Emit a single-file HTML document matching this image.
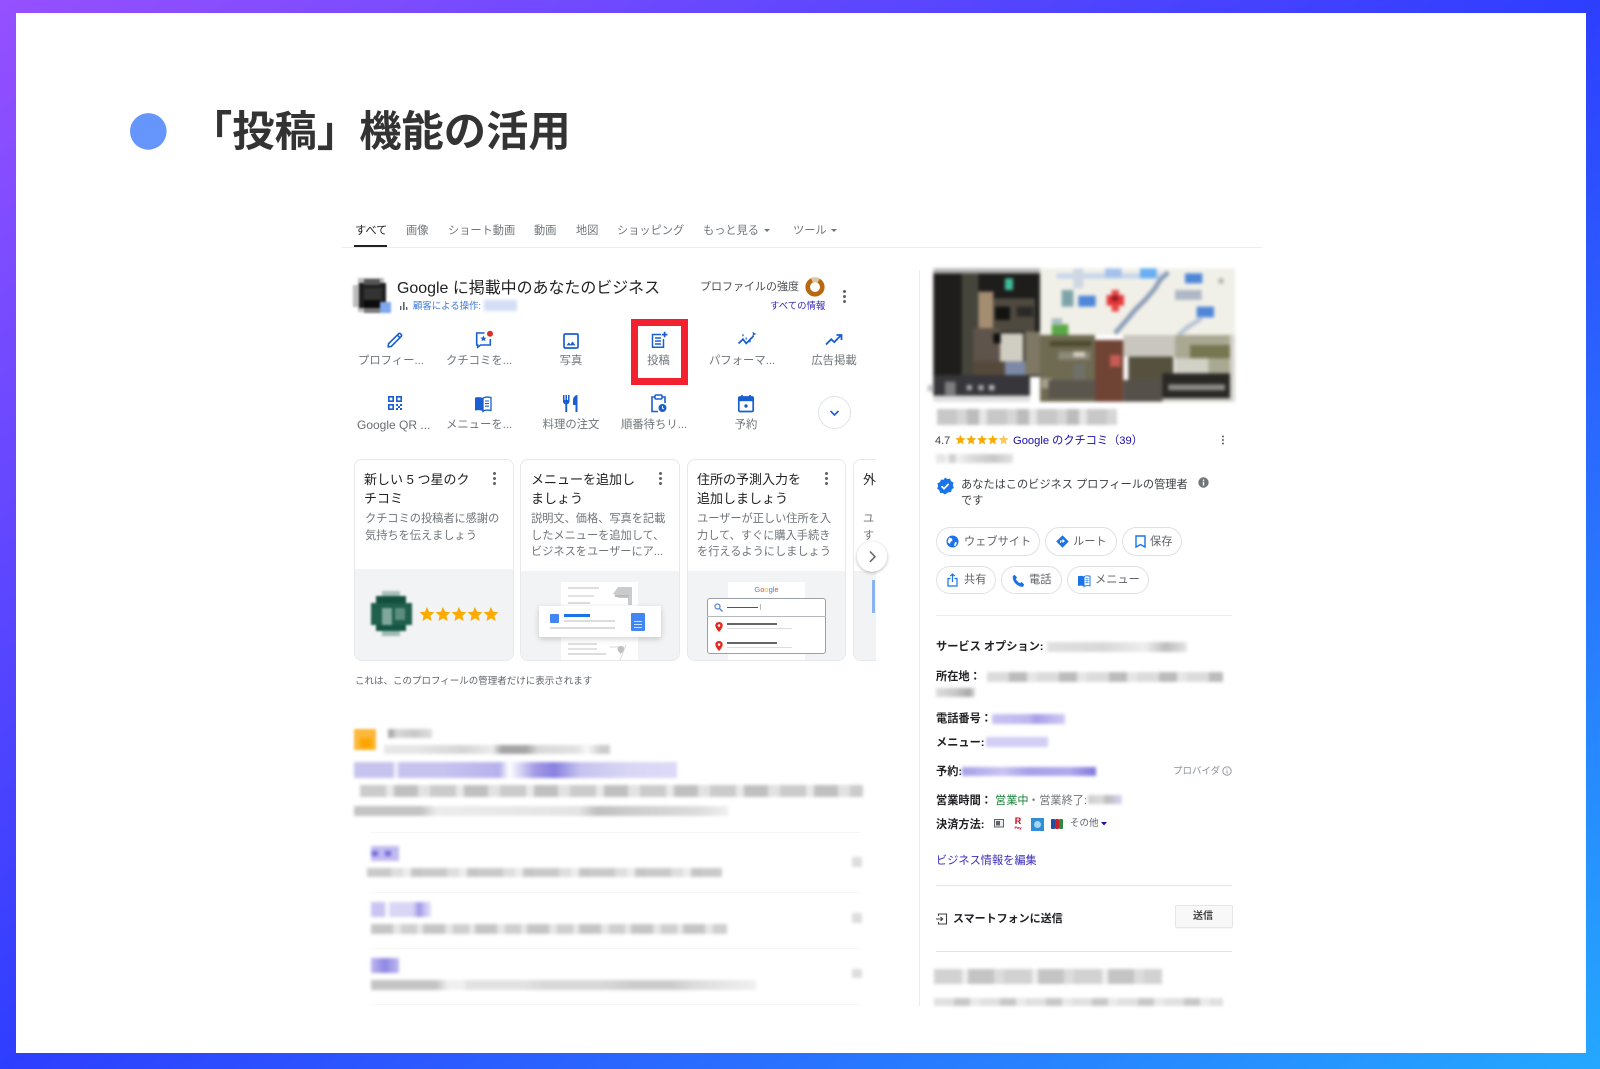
<!DOCTYPE html>
<html lang="ja"><head><meta charset="utf-8"><title>「投稿」機能の活用</title>
<style>
html,body{margin:0;padding:0}
body{width:1600px;height:1069px;overflow:hidden;position:relative;background:linear-gradient(to bottom right,#9650ff 0%,#2e3eff 50%,#24a8ff 100%);font-family:"Liberation Sans","Noto Sans CJK JP",sans-serif}
#w{position:absolute;left:16px;top:13px;width:1570px;height:1040px;background:#fff}
#g{position:absolute;left:0;top:0;width:1600px;height:1069px;filter:blur(.35px)}
.t{position:absolute;white-space:nowrap;height:16px;line-height:16px;font-size:11.2px;color:#70757a}
.c{text-align:center;width:100px}
.k{color:#202124;font-weight:700}
.l{color:#1a0dab}
.b{position:absolute;filter:blur(1.7px)}
.d{position:absolute;height:1px;background:#e8eaed}
.s{position:absolute;display:block;overflow:visible}
.card{position:absolute;top:9px;height:202px;box-sizing:border-box;border:1px solid #e6e8eb;border-radius:8px;overflow:hidden;background:#fff}
.card i{position:absolute;left:-1px;right:-1px;top:109px;bottom:-1px;background:#f1f3f4;display:block}
.chip{position:absolute;box-sizing:border-box;border:1px solid #dfe1e5;border-radius:15px;background:#fff}
.ct{font-size:13px;color:#202124;line-height:19px;height:19px}
.kb{position:absolute;width:3px;height:3px;border-radius:50%;background:#5f6368;box-shadow:0 5px 0 #5f6368,0 -5px 0 #5f6368}
.al{font-size:11.35px}
</style></head><body>
<div id="w"></div>

<svg class="s" style="left:130px;top:113px" width="37" height="37"><circle cx="18.3" cy="18.4" r="18.3" fill="#6696fb"/></svg>
<div style="position:absolute;left:190px;top:105px;height:54px;line-height:54px;font-size:42.3px;font-weight:700;color:#333;white-space:nowrap">「投稿」機能の活用</div>

<div id="g">
<!-- tabs -->
<div class="t" style="left:355px;top:223px;color:#202124">すべて</div>
<div class="t" style="left:406px;top:223px">画像</div>
<div class="t" style="left:448px;top:223px">ショート動画</div>
<div class="t" style="left:534px;top:223px">動画</div>
<div class="t" style="left:576px;top:223px">地図</div>
<div class="t" style="left:617px;top:223px">ショッピング</div>
<div class="t" style="left:703px;top:223px">もっと見る</div>
<div class="t" style="left:793px;top:223px">ツール</div>
<svg class="s" style="left:764px;top:229px" width="6" height="4"><path d="M0 0h6L3 3z" fill="#70757a"/></svg>
<svg class="s" style="left:831px;top:229px" width="6" height="4"><path d="M0 0h6L3 3z" fill="#70757a"/></svg>
<div style="position:absolute;left:354px;top:245px;width:33px;height:2px;background:#202124"></div>
<div class="d" style="left:342px;top:247px;width:920px;background:#ebedf0"></div>

<!-- header -->
<svg class="s" style="left:350px;top:276px;filter:blur(1px)" width="42" height="38" viewBox="0 0 42 38">
<rect x="3" y="9" width="6" height="22" fill="#bbb"/><rect x="8" y="2" width="26" height="34" fill="#bcbcbc"/>
<rect x="9" y="7" width="27" height="25" fill="#1e1e1e"/><rect x="14" y="3" width="16" height="6" fill="#555"/>
<rect x="14" y="12" width="18" height="12" fill="#333"/><rect x="14" y="24" width="16" height="8" fill="#0c0c0c"/>
<rect x="30" y="26" width="11" height="11" fill="#80a8ee"/><rect x="14" y="32" width="16" height="5" fill="#777"/>
</svg>
<div class="t" style="left:397px;top:279px;height:20px;line-height:20px;font-size:15.95px;color:#202124">Google に掲載中のあなたのビジネス</div>
<svg class="s" style="left:400px;top:301px" width="8" height="9"><path d="M0 5h1.4v4H0zM3 1h1.6v8H3zM6 6h1.4v3H6z" fill="#5f6368"/></svg>
<div class="t" style="left:413px;top:298px;font-size:9.4px;color:#3b78d8">顧客による操作:</div>
<div class="b" style="left:484px;top:300px;width:33px;height:11px;background:#d4def5"></div>
<div class="t" style="left:700px;top:279px;font-size:11px;color:#4a4d51">プロファイルの強度</div>
<svg class="s" style="left:805px;top:277px" width="20" height="20"><circle cx="10" cy="10" r="7.3" fill="none" stroke="#b8690f" stroke-width="4.6"/><circle cx="10" cy="10" r="7.3" fill="none" stroke="#dcc6a4" stroke-width="4.6" stroke-dasharray="7 40" transform="rotate(-115 10 10)"/></svg>
<div class="kb" style="left:843px;top:295px"></div>
<div class="t" style="left:770px;top:298px;font-size:9.4px;color:#3526b5">すべての情報</div>

<!-- action icons row 1 -->
<svg class="s" style="left:386px;top:331px" width="18" height="18" viewBox="0 0 18 18" fill="none" stroke="#1a5fd0" stroke-width="1.6"><path d="M2.5 12.8 2.2 15.8l3-.3L15.2 5.4a1.3 1.3 0 0 0 0-1.8l-.8-.8a1.3 1.3 0 0 0-1.8 0z"/><path d="M11.4 4.2l2.4 2.4"/></svg>
<svg class="s" style="left:474px;top:330px" width="20" height="20" viewBox="0 0 20 20"><path d="M10.5 3H2.7v12h1v2.2L6.6 15h9.7V9" fill="none" stroke="#1a5fd0" stroke-width="1.6"/><path d="M9.4 5.4l.9 2.2 2.2.1-1.7 1.4.6 2.2-2-1.2-2 1.2.6-2.2-1.7-1.4 2.2-.1z" fill="#1a5fd0"/><circle cx="16" cy="3.7" r="3" fill="#d93025"/></svg>
<svg class="s" style="left:562px;top:332px" width="18" height="18" viewBox="0 0 18 18"><rect x="2" y="2" width="14" height="14" rx="1.2" fill="none" stroke="#1a5fd0" stroke-width="1.7"/><path d="M4.5 13.4l2.3-3 1.7 2 2-3 3 4z" fill="#1a5fd0"/></svg>
<svg class="s" style="left:650px;top:331px" width="18" height="18" viewBox="0 0 18 18" fill="none" stroke="#1a5fd0" stroke-width="1.5"><path d="M11 3.5H2.5v12.8h11V8"/><path d="M5 7h6M5 10h6M5 13h6"/><path d="M14.6 .8v5.6M11.8 3.6h5.6" stroke-width="1.7"/></svg>
<svg class="s" style="left:737px;top:331px" width="20" height="18" viewBox="0 0 20 18" fill="none" stroke="#1a5fd0" stroke-width="1.7"><path d="M1.500 12.500 6 8.200l3.200 4.200L16.500 5"/><path d="M6 3.200v2M9.200 6.500v2M13 9.500v2M16 1.200l.5 1.300 1.300.5-1.300.5-.5 1.300" stroke-width="1.300"/></svg>
<svg class="s" style="left:825px;top:332px" width="18" height="16" viewBox="0 0 18 16" fill="none" stroke="#1a5fd0" stroke-width="1.8"><path d="M1 12.500 6.300 7.300l3 2.800 6.400-6.600"/><path d="M11.500 3h5v5"/></svg>
<!-- labels row 1 -->
<div class="t al" style="left:358px;top:353px">プロフィー...</div>
<div class="t al" style="left:446px;top:353px">クチコミを...</div>
<div class="t c al" style="left:521px;top:353px">写真</div>
<div class="t c al" style="left:608.500px;top:353px">投稿</div>
<div class="t al" style="left:709px;top:353px">パフォーマ...</div>
<div class="t c al" style="left:784px;top:353px">広告掲載</div>
<!-- red box -->
<div style="position:absolute;left:631px;top:319px;width:56.500px;height:66px;box-sizing:border-box;border:7px solid #f3212f"></div>

<!-- action icons row 2 -->
<svg class="s" style="left:387px;top:395px" width="16" height="16" viewBox="0 0 16 16" fill="#1a5fd0"><path d="M1 1h6v6H1zM2.600 2.600v2.800h2.800V2.600zM9 1h6v6H9zM10.600 2.600v2.800h2.800V2.600zM1 9h6v6H1zM2.600 10.600v2.800h2.800v-2.800z" fill-rule="evenodd"/><path d="M9 9h2v2H9zM13 9h2v2h-2zM11 11h2v2h-2zM9 13h2v2H9zM13 13h2v2h-2z"/></svg>
<svg class="s" style="left:474px;top:396px" width="18" height="16" viewBox="0 0 18 16"><path d="M9 2.200C7.500 1 4.500.8 1 1.500V14.500c3.500-.7 6.500-.5 8 .9z" fill="#1a5fd0"/><path d="M9 2.200c1.500-1.200 4.500-1.400 8-.7V14.500c-3.500-.7-6.500-.5-8 .9z" fill="none" stroke="#1a5fd0" stroke-width="1.300"/><path d="M11 5h4M11 7.600h4M11 10.200h4" stroke="#1a5fd0" stroke-width="1.100"/></svg>
<svg class="s" style="left:562px;top:394px" width="17" height="19" viewBox="0 0 17 19" fill="#1a5fd0"><path d="M1 1h1.500v5h1V1H5v5h1V1h1.500v6.500C7.500 9 6.200 10 5.200 10.200V18H3.300V10.200C2.200 10 1 9 1 7.500z"/><path d="M11 6c0-2.500 2-5 4.500-5v17h-2v-7H11z"/></svg>
<svg class="s" style="left:650px;top:394px" width="17" height="19" viewBox="0 0 17 19"><path d="M5 3H2v14.500h6M12 3h3v6" fill="none" stroke="#1a5fd0" stroke-width="1.600"/><rect x="5" y="1" width="7" height="4" rx="1" fill="none" stroke="#1a5fd0" stroke-width="1.500"/><circle cx="12.500" cy="14" r="4" fill="#1a5fd0"/><path d="M12.500 12v2.200l1.400.8" stroke="#fff" stroke-width=".9" fill="none"/></svg>
<svg class="s" style="left:737px;top:394px" width="18" height="19" viewBox="0 0 18 19"><rect x="1.800" y="3" width="14.400" height="14.500" rx="1.200" fill="none" stroke="#1a5fd0" stroke-width="1.700"/><path d="M1.800 3.500h14.400v3.700H1.800z" fill="#1a5fd0"/><path d="M5 1v3M13 1v3" stroke="#1a5fd0" stroke-width="1.700"/><circle cx="9" cy="12" r="1.700" fill="#1a5fd0"/></svg>
<!-- labels row 2 -->
<div class="t al" style="left:357px;top:417px;color:#6a6e72;font-size:12px">Google QR ...</div>
<div class="t al" style="left:446px;top:417px">メニューを...</div>
<div class="t c al" style="left:521px;top:417px">料理の注文</div>
<div class="t al" style="left:621px;top:417px">順番待ちリ...</div>
<div class="t c al" style="left:696px;top:417px">予約</div>
<svg class="s" style="left:818px;top:396px" width="33" height="33"><circle cx="16.500" cy="16.500" r="16" fill="#fff" stroke="#e0e2e6"/><path d="M12.500 15l4 4 4-4" fill="none" stroke="#1a5fd0" stroke-width="1.600"/></svg>

<!-- cards -->
<div style="position:absolute;left:340px;top:450px;width:536px;height:215px;overflow:hidden">
  <div class="card" style="left:14px;width:160px"><i></i></div>
  <div class="card" style="left:180px;width:160px"><i style="top:111px"></i></div>
  <div class="card" style="left:347px;width:159px"><i style="top:111px"></i></div>
  <div class="card" style="left:513px;width:60px"><i style="top:111px"></i></div>
  <div style="position:absolute;left:532px;top:130px;width:3px;height:33px;background:#8ab4f0"></div>
</div>
<div class="t ct" style="left:364px;top:470px">新しい 5 つ星のク</div>
<div class="t ct" style="left:364px;top:489px">チコミ</div>
<div class="t" style="left:365px;top:511px">クチコミの投稿者に感謝の</div>
<div class="t" style="left:365px;top:528px">気持ちを伝えましょう</div>
<div class="kb" style="left:493px;top:477px"></div>

<div class="t ct" style="left:531px;top:470px">メニューを追加し</div>
<div class="t ct" style="left:531px;top:489px">ましょう</div>
<div class="t" style="left:531px;top:511px">説明文、価格、写真を記載</div>
<div class="t" style="left:531px;top:528px">したメニューを追加して、</div>
<div class="t" style="left:531px;top:544px">ビジネスをユーザーにア...</div>
<div class="kb" style="left:659px;top:477px"></div>

<div class="t ct" style="left:697px;top:470px">住所の予測入力を</div>
<div class="t ct" style="left:697px;top:489px">追加しましょう</div>
<div class="t" style="left:697px;top:511px">ユーザーが正しい住所を入</div>
<div class="t" style="left:697px;top:528px">力して、すぐに購入手続き</div>
<div class="t" style="left:697px;top:544px">を行えるようにしましょう</div>
<div class="kb" style="left:825px;top:477px"></div>

<div class="t ct" style="left:863px;top:470px;width:13px;overflow:hidden">外</div>
<div class="t" style="left:863px;top:511px;width:13px;overflow:hidden">ユ</div>
<div class="t" style="left:863px;top:528px;width:13px;overflow:hidden">す</div>

<!-- next btn -->
<svg class="s" style="left:850px;top:535px" width="44" height="44"><defs><filter id="sh" x="-30%" y="-30%" width="160%" height="160%"><feDropShadow dx="0" dy="1" stdDeviation="1.500" flood-color="#000" flood-opacity=".3"/></filter></defs><circle cx="22" cy="21.700" r="15" fill="#fff" filter="url(#sh)"/><path d="M20 16.500l5 5.200-5 5.200" fill="none" stroke="#5f6368" stroke-width="1.500"/></svg>

<!-- avatar green -->
<svg class="s" style="left:371px;top:591px;filter:blur(1.100px)" width="41" height="45" viewBox="0 0 41 45">
<rect x="11" y="0" width="18" height="45" fill="#a8c0b8"/><rect x="5" y="5" width="30" height="35" fill="#3b7562"/><rect x="0" y="12" width="41" height="22" fill="#1f5f4c"/><rect x="5" y="5" width="30" height="7" fill="#144f3e"/><rect x="11" y="17" width="10" height="17" fill="#7fa79a"/><rect x="24" y="17" width="10" height="12" fill="#5d8d7f"/><rect x="5" y="34" width="30" height="6" fill="#145543"/><rect x="11" y="40" width="18" height="5" fill="#a0bab2"/>
</svg>
<!-- stars card1 -->
<svg class="s" style="left:419px;top:606px" width="80" height="16" viewBox="0 0 80 16" fill="#f9ab00">
<path d="M8 12.300 3.400 15l1.200-5.200L.6 6.300l5.300-.5L8 1l2.100 4.800 5.300.5-4 3.500L12.600 15z"/>
<path transform="translate(16)" d="M8 12.300 3.400 15l1.200-5.200L.6 6.300l5.300-.5L8 1l2.100 4.800 5.300.5-4 3.500L12.600 15z"/>
<path transform="translate(32)" d="M8 12.300 3.400 15l1.200-5.200L.6 6.300l5.300-.5L8 1l2.100 4.800 5.300.5-4 3.500L12.600 15z"/>
<path transform="translate(48)" d="M8 12.300 3.400 15l1.200-5.200L.6 6.300l5.300-.5L8 1l2.100 4.800 5.300.5-4 3.500L12.600 15z"/>
<path transform="translate(64)" d="M8 12.300 3.400 15l1.200-5.200L.6 6.300l5.300-.5L8 1l2.100 4.800 5.300.5-4 3.500L12.600 15z"/>
</svg>

<!-- card2 illustration -->
<div style="position:absolute;left:561px;top:582px;width:77px;height:78px;background:#fff"></div>
<div style="position:absolute;left:568px;top:587px;width:31px;height:2px;background:#ddd"></div>
<div style="position:absolute;left:568px;top:595px;width:26px;height:2px;background:#e2e2e2"></div>
<div style="position:absolute;left:568px;top:602px;width:22px;height:2px;background:#ddd"></div>
<svg class="s" style="left:612px;top:586px" width="22" height="20"><path d="M6 1h14v18h-4v-7H6V10L1 8z" fill="#c9cbcd"/><rect x="3" y="9" width="14" height="2" fill="#b9bbbd"/></svg>
<div style="position:absolute;left:539px;top:606px;width:122px;height:31px;background:#fff;border-radius:2px;box-shadow:0 2px 6px rgba(0,0,0,.18)"></div>
<div style="position:absolute;left:549.500px;top:614px;width:9px;height:9px;border-radius:1px;background:#4285f4"></div>
<div style="position:absolute;left:564px;top:614px;width:26px;height:3px;background:#1a73e8"></div>
<div style="position:absolute;left:564px;top:620px;width:51px;height:2px;background:#dcdcdc"></div>
<div style="position:absolute;left:550px;top:627px;width:65px;height:2px;background:#dcdcdc"></div>
<div style="position:absolute;left:631px;top:613px;width:14px;height:17.500px;background:#4285f4;border-radius:1px"></div>
<div style="position:absolute;left:634px;top:621px;width:8px;height:1px;background:#cfe0fc;box-shadow:0 3px 0 #cfe0fc,0 6px 0 #cfe0fc"></div>
<div style="position:absolute;left:568px;top:643px;width:29px;height:1.500px;background:#ddd;box-shadow:0 5px 0 #e2e2e2"></div>
<div style="position:absolute;left:568px;top:653px;width:38px;height:1.500px;background:#ddd"></div>
<svg class="s" style="left:610px;top:642px" width="24" height="18"><path d="M0 5h14M10 18L16 3" stroke="#d9dadb" fill="none"/><path d="M21 0c-2.500 0-4 1.800-4 3.800 0 2.500 4 6.200 4 6.200s4-3.700 4-6.200C25 1.800 23.500 0 21 0z" fill="#bdbfc1" transform="translate(-6 4) scale(.8)"/></svg>

<!-- card3 illustration -->
<div style="position:absolute;left:728px;top:582px;width:77px;height:78px;background:#fff"></div>
<div style="position:absolute;left:728px;top:584px;width:77px;text-align:center;font-size:7.500px;line-height:12px;font-family:'Liberation Sans',sans-serif;color:#7f9fd8"><span style="color:#4285f4">G</span><span style="color:#ea4335">o</span><span style="color:#fbbc05">o</span><span style="color:#4285f4">g</span><span style="color:#34a853">l</span><span style="color:#ea4335">e</span></div>
<div style="position:absolute;left:707px;top:598px;width:119px;height:56px;box-sizing:border-box;background:#fff;border:1px solid #9aa0a6;border-radius:3px"></div>
<div style="position:absolute;left:707px;top:616px;width:119px;height:1px;background:#b5b9bd"></div>
<svg class="s" style="left:714px;top:603px" width="9" height="9"><circle cx="3.500" cy="3.500" r="2.500" fill="none" stroke="#5a7fd6" stroke-width="1.200"/><path d="M5.500 5.500L8.500 8.500" stroke="#5a7fd6" stroke-width="1.300"/></svg>
<div style="position:absolute;left:727px;top:606.500px;width:31px;height:1.500px;background:#555"></div>
<div style="position:absolute;left:760px;top:604px;width:1px;height:6px;background:#bbb"></div>
<div style="position:absolute;left:727px;top:623px;width:50px;height:2px;background:#666"></div>
<div style="position:absolute;left:727px;top:627.500px;width:65px;height:1.500px;background:#ddd"></div>
<div style="position:absolute;left:727px;top:642px;width:50px;height:2px;background:#666"></div>
<div style="position:absolute;left:727px;top:646.500px;width:65px;height:1.500px;background:#ddd"></div>
<svg class="s" style="left:715px;top:622px" width="8" height="10"><path d="M4 0C1.800 0 .3 1.600.3 3.500.3 6 4 10 4 10s3.700-4 3.700-6.500C7.700 1.600 6.200 0 4 0z" fill="#e5281f"/><circle cx="4" cy="3.500" r="1.300" fill="#fff"/></svg>
<svg class="s" style="left:715px;top:641px" width="8" height="10"><path d="M4 0C1.800 0 .3 1.600.3 3.500.3 6 4 10 4 10s3.700-4 3.700-6.500C7.700 1.600 6.200 0 4 0z" fill="#e5281f"/><circle cx="4" cy="3.500" r="1.300" fill="#fff"/></svg>

<div class="t" style="left:355px;top:674px;font-size:9.500px;color:#5f6368">これは、このプロフィールの管理者だけに表示されます</div>

<!-- blurred organic result -->
<div class="b" style="left:354px;top:729px;width:22px;height:21px;background:#fcb83c;filter:blur(1.300px)"></div>
<div class="b" style="left:360px;top:738px;width:12px;height:10px;background:#fba600"></div>
<div class="b" style="left:388px;top:729px;width:44px;height:9px;background:linear-gradient(90deg,#aaa 0 8%,#d8d8d8 20%,#c8c8c8 60%,#ddd)"></div>
<div class="b" style="left:384px;top:745px;width:226px;height:9px;background:linear-gradient(90deg,#e6e6e6 0 15%,#d5d5d5 35%,#ececec 48%,#a5a5a5 52%,#a5a5a5 63%,#d8d8d8 68%,#e2e2e2 85%,#f8f8f8 90%,#ccc 96%)"></div>
<div class="b" style="left:354px;top:762px;width:323px;height:16px;background:linear-gradient(90deg,#c6c3ef 0 12%,#fff 13%,#c6c3ef 14% 22%,#c6c3ef 28%,#b6b1ec 45%,#fff 48%,#a39ce6 56%,#8880e0 62%,#c6c3ef 70%,#d8d6f4 85%,#dcdaf6)"></div>
<div class="b" style="left:360px;top:785px;width:503px;height:12px;background:repeating-linear-gradient(90deg,#cbcbcb 0 26px,#e8e8e8 26px 34px,#c0c0c0 34px 58px,#e2e2e2 58px 70px)"></div>
<div class="b" style="left:354px;top:806px;width:374px;height:10px;background:linear-gradient(90deg,#c4c4c4 0 18%,#ececec 22%,#e4e4e4 60%,#c0c0c0 65%,#cdcdcd 75%,#dcdcdc 92%,#f0f0f0)"></div>
<div class="d" style="left:370px;top:832px;width:490px;background:#f6f6f6"></div>

<div class="b" style="left:371px;top:846px;width:28px;height:15px;background:#c0baf0"></div>
<div class="b" style="left:372px;top:851px;width:20px;height:5px;background:repeating-linear-gradient(90deg,#7468d8 0 6px,#c0baf0 6px 13px)"></div>
<div class="b" style="left:367px;top:868px;width:355px;height:9px;background:repeating-linear-gradient(90deg,#cacaca 0 24px,#dedede 24px 36px,#ececec 36px 44px,#c6c6c6 44px 56px)"></div>
<div class="b" style="left:852px;top:857px;width:10px;height:10px;background:#ddd"></div>
<div class="d" style="left:370px;top:892px;width:490px;background:#f7f7f7"></div>

<div class="b" style="left:371px;top:902px;width:60px;height:15px;background:linear-gradient(90deg,#c9c5f2 0 22%,#fff 26% 28%,#d8d5f5 33% 70%,#9d96e6 80%,#c9c5f2 90%,#e4e2f8)"></div>
<div class="b" style="left:371px;top:924px;width:356px;height:10px;background:repeating-linear-gradient(90deg,#c6c6c6 0 22px,#e6e6e6 22px 30px,#cfcfcf 30px 46px,#e8e8e8 46px 52px)"></div>
<div class="b" style="left:852px;top:913px;width:10px;height:10px;background:#ddd"></div>
<div class="d" style="left:370px;top:948px;width:490px;background:#f7f7f7"></div>

<div class="b" style="left:371px;top:958px;width:28px;height:15px;background:linear-gradient(90deg,#bdb7ef,#8e87e4 50%,#c0baf0)"></div>
<div class="b" style="left:371px;top:980px;width:385px;height:10px;background:linear-gradient(90deg,#c4c4c4 0 17%,#f0f0f0 20% 24%,#e2e2e2 25% 40%,#d8d8d8 45% 60%,#cccccc 68% 78%,#dedede 85%,#f0f0f0 100%)"></div>
<div class="b" style="left:852px;top:969px;width:10px;height:9px;background:#ddd"></div>
<div class="d" style="left:370px;top:1004px;width:490px;background:#f7f7f7"></div>

<!-- vertical divider -->
<div style="position:absolute;left:919px;top:270px;width:1px;height:736px;background:#ececec"></div>

<!-- photo mosaic -->
<svg class="s" style="left:925px;top:265px;filter:blur(1.500px)" width="315" height="140" viewBox="0 0 945 420">
<rect x="25" y="10" width="320" height="18" fill="#b4b4b4"/>
<rect x="25" y="25" width="320" height="310" fill="#1e1d1b"/>
<rect x="110" y="25" width="50" height="305" fill="#45453c"/>
<rect x="160" y="80" width="45" height="110" fill="#a58d72"/>
<rect x="205" y="100" width="125" height="100" fill="#4f4a40"/>
<rect x="210" y="125" width="45" height="40" fill="#121210"/>
<rect x="275" y="125" width="50" height="30" fill="#2b2a27"/>
<rect x="145" y="190" width="80" height="100" fill="#5f544b"/>
<rect x="225" y="205" width="70" height="85" fill="#d0cdc2"/>
<rect x="205" y="205" width="22" height="30" fill="#0e0e0e"/>
<rect x="240" y="40" width="24" height="35" fill="#3fbc9c"/>
<rect x="240" y="290" width="60" height="45" fill="#7c8aa8"/>
<rect x="145" y="290" width="95" height="40" fill="#55493b"/>
<rect x="300" y="200" width="45" height="130" fill="#7d7764"/>
<rect x="25" y="330" width="290" height="65" fill="#37363a"/>
<rect x="8" y="360" width="18" height="20" fill="#c4c4c4"/>
<rect x="60" y="350" width="32" height="40" fill="#7d7d7d"/>
<rect x="125" y="360" width="16" height="16" fill="#a5a5a5"/>
<rect x="160" y="360" width="16" height="16" fill="#a5a5a5"/>
<rect x="192" y="360" width="16" height="16" fill="#b8b8b8"/>
<rect x="25" y="392" width="290" height="18" fill="#ddd"/>
<rect x="345" y="10" width="585" height="200" fill="#f1f0e8"/>
<rect x="395" y="25" width="320" height="16" fill="#c8d6ec"/>
<rect x="445" y="10" width="30" height="60" fill="#cfd7e2"/>
<rect x="645" y="10" width="50" height="30" fill="#68aef0"/>
<rect x="540" y="10" width="50" height="28" fill="#a4c2ec"/>
<rect x="410" y="75" width="35" height="50" fill="#7ea4aa"/>
<rect x="460" y="92" width="52" height="33" fill="#4f86d8"/>
<rect x="780" y="25" width="52" height="30" fill="#4f86d8"/>
<rect x="815" y="125" width="52" height="32" fill="#4f86d8"/>
<rect x="750" y="75" width="80" height="30" fill="#b0b8c6"/>
<rect x="880" y="40" width="16" height="16" fill="#b8b8b8"/>
<path d="M730 22 705 45 690 70 660 105 630 135 605 165 570 205" stroke="#8b9db8" stroke-width="14" fill="none"/>
<path d="M830 160 790 185 760 210" stroke="#b9c5d4" stroke-width="14" fill="none"/>
<rect x="560" y="75" width="22" height="65" fill="#e8484a"/>
<rect x="545" y="90" width="52" height="32" fill="#e8383a"/>
<rect x="560" y="92" width="20" height="16" fill="#8a1c1c"/>
<rect x="380" y="178" width="50" height="32" fill="#5aa845"/>
<rect x="380" y="160" width="32" height="20" fill="#a9bdc0"/>
<rect x="345" y="210" width="165" height="200" fill="#6f6a52"/>
<rect x="375" y="228" width="125" height="16" fill="#4d4a2f"/>
<rect x="400" y="260" width="95" height="24" fill="#8c8a78"/>
<rect x="445" y="260" width="35" height="16" fill="#d1cdbd"/>
<rect x="445" y="295" width="35" height="50" fill="#6f7068"/>
<rect x="350" y="340" width="30" height="30" fill="#a5a08c"/>
<rect x="510" y="225" width="85" height="185" fill="#6f4434"/>
<rect x="555" y="270" width="32" height="35" fill="#c85a55"/>
<rect x="595" y="210" width="155" height="65" fill="#c8c6be"/>
<rect x="610" y="275" width="135" height="75" fill="#56513f"/>
<rect x="750" y="210" width="165" height="135" fill="#a9a993"/>
<rect x="795" y="240" width="120" height="40" fill="#76764f"/>
<rect x="750" y="280" width="100" height="50" fill="#d2d1c6"/>
<rect x="595" y="345" width="120" height="65" fill="#55504a"/>
<rect x="370" y="345" width="140" height="55" fill="#5a564e"/>
<rect x="712" y="325" width="205" height="75" fill="#2a2825"/>
<rect x="730" y="358" width="170" height="18" fill="#8a8a88"/>
<rect x="712" y="400" width="218" height="10" fill="#c8c6c0"/>
<rect x="915" y="210" width="15" height="200" fill="#d6d5cf"/>
</svg>

<!-- right panel -->
<div class="b" style="left:937px;top:409px;width:180px;height:16px;background:repeating-linear-gradient(90deg,#c8c8c8 0 20px,#d6d6d6 20px 30px,#bcbcbc 30px 42px,#e6e6e6 42px 50px)"></div>
<div class="t" style="left:935px;top:433px;font-size:11px;color:#3c4043">4.7</div>
<svg class="s" style="left:955px;top:434px" width="54" height="11" viewBox="0 0 80 16" preserveAspectRatio="none" fill="#f9ab00">
<path d="M8 12.300 3.400 15l1.200-5.200L.6 6.300l5.300-.5L8 1l2.100 4.800 5.300.5-4 3.500L12.600 15z"/>
<path transform="translate(16)" d="M8 12.300 3.400 15l1.200-5.200L.6 6.300l5.300-.5L8 1l2.100 4.800 5.300.5-4 3.500L12.600 15z"/>
<path transform="translate(32)" d="M8 12.300 3.400 15l1.200-5.200L.6 6.300l5.300-.5L8 1l2.100 4.800 5.300.5-4 3.500L12.600 15z"/>
<path transform="translate(48)" d="M8 12.300 3.400 15l1.200-5.200L.6 6.300l5.300-.5L8 1l2.100 4.800 5.300.5-4 3.500L12.600 15z"/>
<path transform="translate(64)" d="M8 12.300 3.400 15l1.200-5.200L.6 6.300l5.300-.5L8 1l2.100 4.800 5.300.5-4 3.500L12.600 15z" opacity=".65"/>
</svg>
<div class="t l" style="left:1013px;top:433px">Google のクチコミ（39）</div>
<div class="kb" style="left:1221.500px;top:439px;width:2px;height:2px;box-shadow:0 3.500px 0 #5f6368,0 -3.500px 0 #5f6368"></div>
<div class="b" style="left:936px;top:454px;width:77px;height:9px;background:linear-gradient(90deg,#e6e6e6 0 12%,#fff 14%,#d0d0d0 18% 24%,#f2f2f2 28%,#dcdcdc 45%,#c8c8c8 75%,#e2e2e2)"></div>
<svg class="s" style="left:936px;top:477px" width="18" height="18" viewBox="0 0 18 18"><path d="M9 .5l2.300 1.500 2.700-.2 1.100 2.500 2.400 1.300-.6 2.700.9 2.500-2.100 1.700-.7 2.600-2.700.1L9 17.500l-2.300-1.500-2.700-.1-.7-2.600-2.100-1.700.9-2.500-.6-2.700 2.400-1.300 1.100-2.500 2.700.2z" fill="#1a73e8"/><path d="M5.500 9.200l2.500 2.500 4.700-4.800" fill="none" stroke="#fff" stroke-width="1.700"/></svg>
<div class="t" style="left:961px;top:477px;color:#3c4043">あなたはこのビジネス プロフィールの管理者</div>
<div class="t" style="left:961px;top:493px;color:#3c4043">です</div>
<svg class="s" style="left:1198px;top:477px" width="11" height="11"><circle cx="5.500" cy="5.500" r="5.200" fill="#70757a"/><rect x="4.800" y="4.800" width="1.400" height="3.800" fill="#fff"/><rect x="4.800" y="2.500" width="1.400" height="1.400" fill="#fff"/></svg>

<!-- chips -->
<div class="chip" style="left:936px;top:527px;width:104px;height:29px"></div>
<div class="chip" style="left:1045px;top:527px;width:72px;height:29px"></div>
<div class="chip" style="left:1122px;top:527px;width:60px;height:29px"></div>
<div class="chip" style="left:936px;top:566px;width:60px;height:28px"></div>
<div class="chip" style="left:1001px;top:566px;width:61px;height:28px"></div>
<div class="chip" style="left:1067px;top:566px;width:82px;height:28px"></div>
<div class="t" style="left:964px;top:534px;color:#5f6368">ウェブサイト</div>
<div class="t" style="left:1073px;top:534px;color:#5f6368">ルート</div>
<div class="t" style="left:1150px;top:534px;color:#5f6368">保存</div>
<div class="t" style="left:964px;top:572px;color:#5f6368">共有</div>
<div class="t" style="left:1029px;top:572px;color:#5f6368">電話</div>
<div class="t" style="left:1095px;top:572px;color:#5f6368">メニュー</div>
<svg class="s" style="left:946px;top:535px" width="13" height="13" viewBox="0 0 13 13"><circle cx="6.500" cy="6.500" r="6" fill="#1a73e8"/><path d="M3 2.500l3 1 .5 2-2 1.500-.5 2L1.500 7zM9 7l2 .5-1.500 3.500-1.500-.5z" fill="#fff"/></svg>
<svg class="s" style="left:1056px;top:535px" width="13" height="13" viewBox="0 0 13 13"><path d="M6.500.3l6.200 6.200-6.200 6.200L.3 6.500z" fill="#1a73e8"/><path d="M4.500 8V6h3.300M6.500 4.500l1.700 1.500-1.700 1.500" fill="none" stroke="#fff" stroke-width="1"/></svg>
<svg class="s" style="left:1135px;top:535px" width="11" height="13" viewBox="0 0 11 13"><path d="M1 1h9v11L5.500 9.500 1 12z" fill="none" stroke="#1a73e8" stroke-width="1.400"/></svg>
<svg class="s" style="left:947px;top:573px" width="11" height="14" viewBox="0 0 11 14" fill="none" stroke="#1a73e8" stroke-width="1.200"><path d="M3.500 5.500H1v7.500h9V5.500H7.500"/><path d="M5.500 9V1M3.300 3L5.500 1l2.200 2"/></svg>
<svg class="s" style="left:1012px;top:574px" width="13" height="13" viewBox="0 0 13 13"><path d="M2.500.8 5 3.300 3.900 5.100c.8 1.700 2.200 3.100 4 4l1.800-1.100 2.500 2.500-.9 1.800c-.3.500-.9.700-1.500.6C4.900 12 1 8.100.7 3.200c0-.6.200-1.100.6-1.400z" fill="#1a73e8"/></svg>
<svg class="s" style="left:1077px;top:575px" width="14" height="12" viewBox="0 0 18 16"><path d="M9 2.200C7.500 1 4.500.8 1 1.500V14.500c3.500-.7 6.500-.5 8 .9z" fill="#1a73e8"/><path d="M9 2.200c1.500-1.200 4.500-1.400 8-.7V14.500c-3.500-.7-6.500-.5-8 .9z" fill="none" stroke="#1a73e8" stroke-width="1.300"/><path d="M11 5h4M11 7.600h4M11 10.200h4" stroke="#1a73e8" stroke-width="1.100"/></svg>

<div class="d" style="left:936px;top:615px;width:296px"></div>

<!-- info rows -->
<div class="t k" style="left:936px;top:639px">サービス オプション:</div>
<div class="b" style="left:1047px;top:642px;width:140px;height:10px;background:linear-gradient(90deg,#e0e0e0,#d8d8d8 40%,#eee 70%,#bdbdbd 85%,#e4e4e4)"></div>
<div class="t k" style="left:936px;top:669px">所在地：</div>
<div class="b" style="left:987px;top:672px;width:236px;height:10px;background:repeating-linear-gradient(90deg,#dcdcdc 0 22px,#bcbcbc 22px 40px,#e6e6e6 40px 50px)"></div>
<div class="b" style="left:936px;top:688px;width:39px;height:9px;background:linear-gradient(90deg,#ddd,#c8c8c8 50%,#a8a8a8 85%,#ddd)"></div>
<div class="t k" style="left:936px;top:711px">電話番号：</div>
<div class="b" style="left:992px;top:714px;width:73px;height:10px;background:linear-gradient(90deg,#c9c3f2,#bdb7ef 50%,#a69fe8 60%,#cfcaf4)"></div>
<div class="t k" style="left:936px;top:735px">メニュー:</div>
<div class="b" style="left:986px;top:737px;width:62px;height:10px;background:#d1cdf4"></div>
<div class="t k" style="left:936px;top:764px">予約:</div>
<div class="b" style="left:962px;top:767px;width:134px;height:9px;background:linear-gradient(90deg,#a6a0e8,#c8c4f2 30%,#a6a0e8 50%,#b0aaec 80%,#8078dc)"></div>
<div class="t" style="left:1173px;top:764px;font-size:9.500px;color:#8d9196">プロバイダ</div>
<svg class="s" style="left:1222px;top:766px" width="10" height="10"><circle cx="5" cy="5" r="4.200" fill="none" stroke="#8d9196" stroke-width=".9"/><path d="M5 4.500v3M5 2.500v1" stroke="#8d9196"/></svg>
<div class="t k" style="left:936px;top:793px">営業時間：</div>
<div class="t" style="left:995px;top:793px;color:#188038">営業中</div>
<div class="t" style="left:1028px;top:793px;color:#70757a">・営業終了:</div>
<div class="b" style="left:1088px;top:795px;width:34px;height:9px;background:linear-gradient(90deg,#ccc,#dcdcdc 40%,#bbb 55%,#d8d4f4)"></div>
<div class="t k" style="left:936px;top:817px">決済方法:</div>
<svg class="s" style="left:994px;top:819px" width="10" height="9"><rect x=".5" y=".5" width="9" height="7.500" fill="#eee" stroke="#5f6368"/><rect x="2" y="2" width="4" height="4.500" fill="#5f6368"/></svg>
<div style="position:absolute;left:1012px;top:816px;width:12px;height:16px;text-align:center;font:bold 9px/10px 'Liberation Sans',sans-serif;color:#d0021b">R<div style="font-size:4px;line-height:4px">Pay</div></div>
<div style="position:absolute;left:1031px;top:818px;width:13px;height:13px;background:#2e8fd8"></div>
<div style="position:absolute;left:1034px;top:821px;width:7px;height:7px;background:#a8d4f0;border-radius:50%"></div>
<svg class="s" style="left:1051px;top:819px" width="12" height="10"><rect width="4" height="10" rx="1" fill="#1d4f9c"/><rect x="4" width="4" height="10" rx="1" fill="#c7202c"/><rect x="8" width="4" height="10" rx="1" fill="#2b8a3e"/></svg>
<div class="t" style="left:1070px;top:816px;font-size:9.500px;color:#5f6368">その他</div>
<svg class="s" style="left:1101px;top:822px" width="6" height="4"><path d="M0 0h6L3 3.500z" fill="#1a0dab"/></svg>
<div class="t l" style="left:936px;top:853px;color:#3a2dbb">ビジネス情報を編集</div>
<div class="d" style="left:936px;top:885px;width:296px;background:#e3e3e3"></div>
<svg class="s" style="left:936px;top:913px" width="11" height="12" viewBox="0 0 11 12" fill="none" stroke="#3c4043" stroke-width="1.100"><path d="M2.500 3V1h8v10h-8V9"/><path d="M0 6h6.500M4.500 4l2.200 2-2.200 2"/></svg>
<div class="t k" style="left:953px;top:911px;font-size:11px;color:#202124">スマートフォンに送信</div>
<div style="position:absolute;left:1175px;top:905px;width:58px;height:23px;box-sizing:border-box;background:#f8f8f8;border:1px solid #e6e6e6;border-radius:2px;box-shadow:0 1px 1px rgba(0,0,0,.04)"></div>
<div class="t c k" style="left:1153px;top:909px;font-size:10px;color:#444">送信</div>
<div class="d" style="left:936px;top:951px;width:296px;background:#e3e3e3"></div>
<div class="b" style="left:934px;top:969px;width:228px;height:15px;background:repeating-linear-gradient(90deg,#d2d2d2 0 28px,#eee 28px 34px,#c4c4c4 34px 60px,#dcdcdc 60px 70px)"></div>
<div class="b" style="left:934px;top:998px;width:289px;height:8px;background:repeating-linear-gradient(90deg,#e0e0e0 0 20px,#c8c8c8 20px 36px,#eaeaea 36px 46px)"></div>
</div>
</body></html>
